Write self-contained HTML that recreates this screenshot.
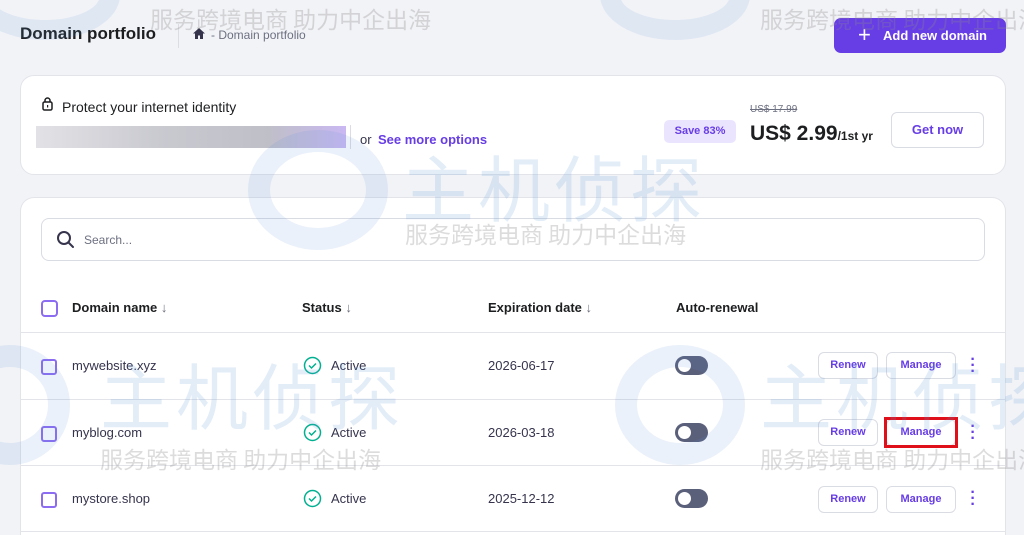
<!DOCTYPE html>
<html><head><meta charset="utf-8"><style>
*{box-sizing:border-box;margin:0;padding:0}
html,body{width:1024px;height:535px;overflow:hidden}
body{background:#f2f3f7;font-family:"Liberation Sans","Noto Sans CJK SC",sans-serif;color:#1d1e20;position:relative}
.abs{position:absolute}
.card{position:absolute;background:#fff;border:1px solid #e3e4ea;border-radius:14px}
.btn{position:absolute;border:1px solid #dadce3;border-radius:6px;background:#fff;color:#673de6;font-weight:bold;font-size:11px;text-align:center}
.cb{position:absolute;width:16px;height:16px;border:2px solid #8c6cf0;border-radius:3px}
.hd{position:absolute;font-size:13px;font-weight:bold;top:300px}
.cell{position:absolute;font-size:13px;color:#36344d}
.tog{position:absolute;width:33px;height:19px;border-radius:10px;background:#5a5f7a}
.tog:after{content:"";position:absolute;left:3px;top:3px;width:13px;height:13px;border-radius:50%;background:#fff}
.line{position:absolute;left:20px;width:985px;height:1px;background:#e3e4ea}
.dots{position:absolute;color:#673de6;font-weight:bold;font-size:16px;line-height:6px;width:6px;text-align:center}
.wm{position:absolute;color:rgba(90,150,215,.17);font-size:72px;letter-spacing:4px;font-family:"Noto Sans CJK SC",sans-serif;white-space:nowrap;pointer-events:none}
.tg{position:absolute;color:rgba(140,140,140,.3);font-size:23px;font-family:"Noto Sans CJK SC",sans-serif;white-space:nowrap}
</style></head><body>
<div class="abs" style="left:20px;top:24px;font-size:17px;font-weight:bold">Domain portfolio</div>
<div class="abs" style="left:178px;top:24px;width:1px;height:24px;background:#dcdde3"></div>
<svg class="abs" style="left:192px;top:27px" width="14" height="13" viewBox="0 0 14 13"><path d="M7 1L1 6.5h2V12h3V8.5h2V12h3V6.5h2z" fill="#36344d"/></svg>
<div class="abs" style="left:211px;top:28px;font-size:12px;color:#6d7081">- Domain portfolio</div>
<div class="abs" style="left:834px;top:18px;width:172px;height:35px;background:#673de6;border-radius:7px;color:#fff;font-weight:bold;font-size:13px;line-height:35px;padding-left:49px">Add new domain</div>
<div class="abs" style="left:858px;top:26px;color:#fff;font-size:22px;line-height:18px">+</div>

<div class="card" style="left:20px;top:75px;width:986px;height:100px"></div>
<svg class="abs" style="left:42px;top:97px" width="11" height="14" viewBox="0 0 11 14"><rect x="1" y="5" width="9" height="8" rx="1.5" fill="none" stroke="#1d1e20" stroke-width="1.5"/><path d="M3 5V3.5a2.5 2.5 0 015 0V5" fill="none" stroke="#1d1e20" stroke-width="1.5"/><rect x="5" y="8" width="1.2" height="2.5" fill="#1d1e20"/></svg>
<div class="abs" style="left:62px;top:99px;font-size:14px">Protect your internet identity</div>
<div class="abs" style="left:36px;top:126px;width:310px;height:22px;background:linear-gradient(90deg,#e2e2e6,#c9c9d0 40%,#bfbfc8 75%,#c9b8f2)"></div>
<div class="abs" style="left:350px;top:125px;width:1px;height:24px;background:#dcdde3"></div>
<div class="abs" style="left:360px;top:132px;font-size:13px;color:#36344d">or</div>
<div class="abs" style="left:378px;top:132px;font-size:13px;font-weight:bold;color:#673de6">See more options</div>
<div class="abs" style="left:664px;top:120px;width:72px;height:23px;background:#ebe4ff;border-radius:5px;color:#673de6;font-size:11px;font-weight:bold;text-align:center;line-height:23px">Save 83%</div>
<div class="abs" style="left:750px;top:104px;font-size:10px;color:#6d7081;text-decoration:line-through">US$ 17.99</div>
<div class="abs" style="left:750px;top:122px;font-size:21px;font-weight:bold">US$ 2.99<span style="font-size:12px">/1st yr</span></div>
<div class="btn" style="left:891px;top:112px;width:93px;height:36px;line-height:34px;font-size:13px">Get now</div>

<div class="card" style="left:20px;top:197px;width:986px;height:338px;border-bottom:none;border-radius:14px 14px 0 0"></div>
<div class="abs" style="left:41px;top:218px;width:944px;height:43px;border:1px solid #dadce3;border-radius:8px"></div>
<svg class="abs" style="left:56px;top:230px" width="20" height="20" viewBox="0 0 20 20"><circle cx="8" cy="8" r="6" fill="none" stroke="#36344d" stroke-width="2"/><path d="M12.5 12.5L17 17" stroke="#36344d" stroke-width="2" stroke-linecap="round"/></svg>
<div class="abs" style="left:84px;top:233px;font-size:12px;color:#6d7081">Search...</div>

<div class="cb" style="left:41px;top:300px;border-radius:4px;width:17px;height:17px"></div>
<div class="hd" style="left:72px">Domain name <span style="font-weight:normal;color:#6d7081">↓</span></div>
<div class="hd" style="left:302px">Status <span style="font-weight:normal;color:#6d7081">↓</span></div>
<div class="hd" style="left:488px">Expiration date <span style="font-weight:normal;color:#6d7081">↓</span></div>
<div class="hd" style="left:676px">Auto-renewal</div>
<div class="line" style="top:332px"></div>

<div class="cb" style="left:41px;top:359px"></div>
<div class="cell" style="left:72px;top:358px">mywebsite.xyz</div>
<svg class="abs" style="left:303px;top:356px" width="19" height="19" viewBox="0 0 19 19"><circle cx="9.5" cy="9.5" r="8" fill="none" stroke="#00b090" stroke-width="1.5"/><path d="M6 9.5l2.5 2.5 4.5-4.5" fill="none" stroke="#00b090" stroke-width="1.5"/></svg>
<div class="cell" style="left:331px;top:358px">Active</div>
<div class="cell" style="left:488px;top:358px">2026-06-17</div>
<div class="tog" style="left:675px;top:356px"></div>
<div class="btn" style="left:818px;top:352px;width:60px;height:27px;line-height:25px">Renew</div>
<div class="btn" style="left:886px;top:352px;width:70px;height:27px;line-height:25px">Manage</div>
<div class="dots" style="left:970px;top:357px">·<br>·<br>·</div>
<div class="line" style="top:399px"></div>

<div class="cb" style="left:41px;top:426px"></div>
<div class="cell" style="left:72px;top:425px">myblog.com</div>
<svg class="abs" style="left:303px;top:423px" width="19" height="19" viewBox="0 0 19 19"><circle cx="9.5" cy="9.5" r="8" fill="none" stroke="#00b090" stroke-width="1.5"/><path d="M6 9.5l2.5 2.5 4.5-4.5" fill="none" stroke="#00b090" stroke-width="1.5"/></svg>
<div class="cell" style="left:331px;top:425px">Active</div>
<div class="cell" style="left:488px;top:425px">2026-03-18</div>
<div class="tog" style="left:675px;top:423px"></div>
<div class="btn" style="left:818px;top:419px;width:60px;height:27px;line-height:25px">Renew</div>
<div class="btn" style="left:886px;top:419px;width:70px;height:27px;line-height:25px">Manage</div>
<div class="abs" style="left:884px;top:417px;width:74px;height:31px;border:3px solid #e0101a"></div>
<div class="dots" style="left:970px;top:424px">·<br>·<br>·</div>
<div class="line" style="top:465px"></div>

<div class="cb" style="left:41px;top:492px"></div>
<div class="cell" style="left:72px;top:491px">mystore.shop</div>
<svg class="abs" style="left:303px;top:489px" width="19" height="19" viewBox="0 0 19 19"><circle cx="9.5" cy="9.5" r="8" fill="none" stroke="#00b090" stroke-width="1.5"/><path d="M6 9.5l2.5 2.5 4.5-4.5" fill="none" stroke="#00b090" stroke-width="1.5"/></svg>
<div class="cell" style="left:331px;top:491px">Active</div>
<div class="cell" style="left:488px;top:491px">2025-12-12</div>
<div class="tog" style="left:675px;top:489px"></div>
<div class="btn" style="left:818px;top:486px;width:60px;height:27px;line-height:25px">Renew</div>
<div class="btn" style="left:886px;top:486px;width:70px;height:27px;line-height:25px">Manage</div>
<div class="dots" style="left:970px;top:490px">·<br>·<br>·</div>
<div class="line" style="top:531px"></div>

<div class="abs" style="left:-30px;top:-50px;width:150px;height:90px;border:20px solid rgba(90,150,215,.12);border-radius:50%"></div>
<div class="abs" style="left:600px;top:-50px;width:150px;height:90px;border:20px solid rgba(90,150,215,.12);border-radius:50%"></div>
<div class="abs" style="left:248px;top:130px;width:140px;height:120px;border:22px solid rgba(90,150,215,.13);border-radius:50%"></div>
<div class="abs" style="left:-50px;top:345px;width:120px;height:120px;border:22px solid rgba(90,150,215,.13);border-radius:50%"></div>
<div class="abs" style="left:615px;top:345px;width:130px;height:120px;border:22px solid rgba(90,150,215,.13);border-radius:50%"></div>
<div class="wm" style="left:402px;top:132px">主机侦探</div>
<div class="wm" style="left:100px;top:340px">主机侦探</div>
<div class="wm" style="left:760px;top:340px">主机侦探</div>
<div class="tg" style="left:150px;top:1px">服务跨境电商 助力中企出海</div>
<div class="tg" style="left:760px;top:1px">服务跨境电商 助力中企出海</div>
<div class="tg" style="left:405px;top:216px">服务跨境电商 助力中企出海</div>
<div class="tg" style="left:100px;top:441px">服务跨境电商 助力中企出海</div>
<div class="tg" style="left:760px;top:441px">服务跨境电商 助力中企出海</div>
</body></html>
